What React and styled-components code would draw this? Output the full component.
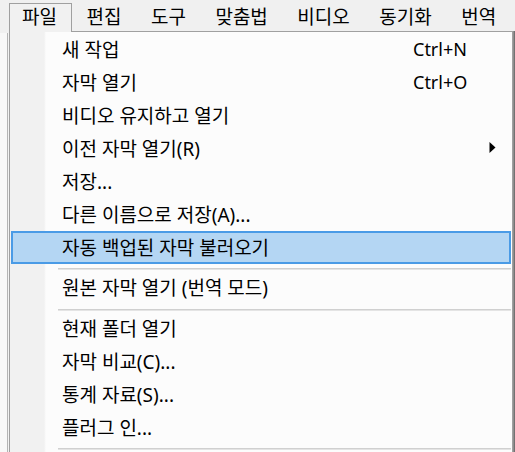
import React from "react";
import styled, { createGlobalStyle } from "styled-components";

const GlobalStyle = createGlobalStyle`
  html, body { margin: 0; padding: 0; background: #f0f0f0; }
  body {
    font-family: "Noto Sans", "Noto Sans CJK KR", sans-serif;
    color: #000;
  }
`;

const Window = styled.div`
  width: 515px;
  height: 452px;
  overflow: hidden;
  display: flex;
  flex-direction: column;
  background: #f0f0f0;
`;

const MenuBar = styled.div`
  display: flex;
  align-items: flex-end;
  gap: 1.5px;
  height: 31px;
  padding-left: 9px;
  background: #f0f0f0;
  flex-shrink: 0;
`;

const BarItem = styled.div`
  position: relative;
  z-index: 2;
  height: ${(p) => (p.$open ? "29px" : "28px")};
  margin-bottom: ${(p) => (p.$open ? "-1px" : "0")};
  box-sizing: border-box;
  padding: 0 14px 0 12px;
  border: 1px solid ${(p) => (p.$open ? "#a0a0a0" : "transparent")};
  border-bottom: none;
  background: ${(p) => (p.$open ? "#f1f1f1" : "transparent")};
  font-size: 19px;
  line-height: 26px;
  white-space: nowrap;
`;

const Body = styled.div`
  flex: 1;
  display: flex;
  min-height: 0;
`;

const LeftEdge = styled.div`
  width: 9px;
  flex-shrink: 0;
  margin-top: 2px;
  background: linear-gradient(
    to right,
    #f8f8f8 0,
    #f8f8f8 7px,
    #b4b4b4 7px,
    #b4b4b4 8px,
    #f2f2f2 8px
  );
`;

const RightEdge = styled.div`
  width: 3px;
  flex-shrink: 0;
  background: linear-gradient(to right, #b0b0b0 0, #6e6e6e 1px, #7d7d7d 3px);
`;

const Panel = styled.div`
  width: 504px;
  flex-shrink: 0;
  box-sizing: border-box;
  border: 1px solid #a0a0a0;
  border-bottom: none;
  padding: 1px 1px 0 1px;
  background: linear-gradient(to right, #f1f1f1 0, #f1f1f1 34px, #fcfcfc 36px, #fcfcfc 100%);
  display: flex;
  flex-direction: column;
`;

const Item = styled.div`
  display: flex;
  align-items: center;
  height: 33px;
  box-sizing: border-box;
  padding-left: 49px;
  padding-bottom: 2px;
  font-size: 19px;
  white-space: nowrap;
  background: ${(p) => (p.$active ? "#b4d6f3" : "transparent")};
  border: 2px solid ${(p) => (p.$active ? "#4a9be6" : "transparent")};
`;

const Label = styled.span`
  flex: 1;
`;

const Shortcut = styled.span`
  width: 72px;
  flex-shrink: 0;
  font-size: 18px;
`;

const ArrowCell = styled.span`
  width: 24px;
  flex-shrink: 0;
  display: flex;
  align-items: center;
  padding-left: 4px;
  box-sizing: border-box;
`;

const Separator = styled.div`
  height: 9px;
  box-sizing: border-box;
  padding: 4px 0 0 47px;
  &::after {
    content: "";
    display: block;
    height: 2px;
    background: linear-gradient(#d0d0d0 0, #d0d0d0 1px, #e4e4e4 1px, #e4e4e4 2px);
  }
`;

const menus = ["파일", "편집", "도구", "맞춤법", "비디오", "동기화", "번역"];

const items = [
  { label: "새 작업", shortcut: "Ctrl+N" },
  { label: "자막 열기", shortcut: "Ctrl+O" },
  { label: "비디오 유지하고 열기" },
  { label: "이전 자막 열기(R)", submenu: true },
  { label: "저장..." },
  { label: "다른 이름으로 저장(A)..." },
  { label: "자동 백업된 자막 불러오기", active: true },
  { sep: true },
  { label: "원본 자막 열기 (번역 모드)" },
  { sep: true },
  { label: "현재 폴더 열기" },
  { label: "자막 비교(C)..." },
  { label: "통계 자료(S)..." },
  { label: "플러그 인..." },
  { sep: true },
];

const Arrow = () => (
  <svg width="7" height="11" viewBox="0 0 7 11">
    <path d="M0.5 0 L6.5 5.5 L0.5 11 Z" fill="#000" />
  </svg>
);

export default function App() {
  return (
    <>
      <GlobalStyle />
      <Window>
        <MenuBar>
          {menus.map((m, i) => (
            <BarItem key={m} $open={i === 0}>
              {m}
            </BarItem>
          ))}
        </MenuBar>
        <Body>
          <LeftEdge />
          <Panel>
            {items.map((it, i) =>
              it.sep ? (
                <Separator key={i} />
              ) : (
                <Item key={i} $active={it.active}>
                  <Label>{it.label}</Label>
                  <Shortcut>{it.shortcut || ""}</Shortcut>
                  <ArrowCell>{it.submenu ? <Arrow /> : null}</ArrowCell>
                </Item>
              )
            )}
          </Panel>
          <RightEdge />
        </Body>
      </Window>
    </>
  );
}
